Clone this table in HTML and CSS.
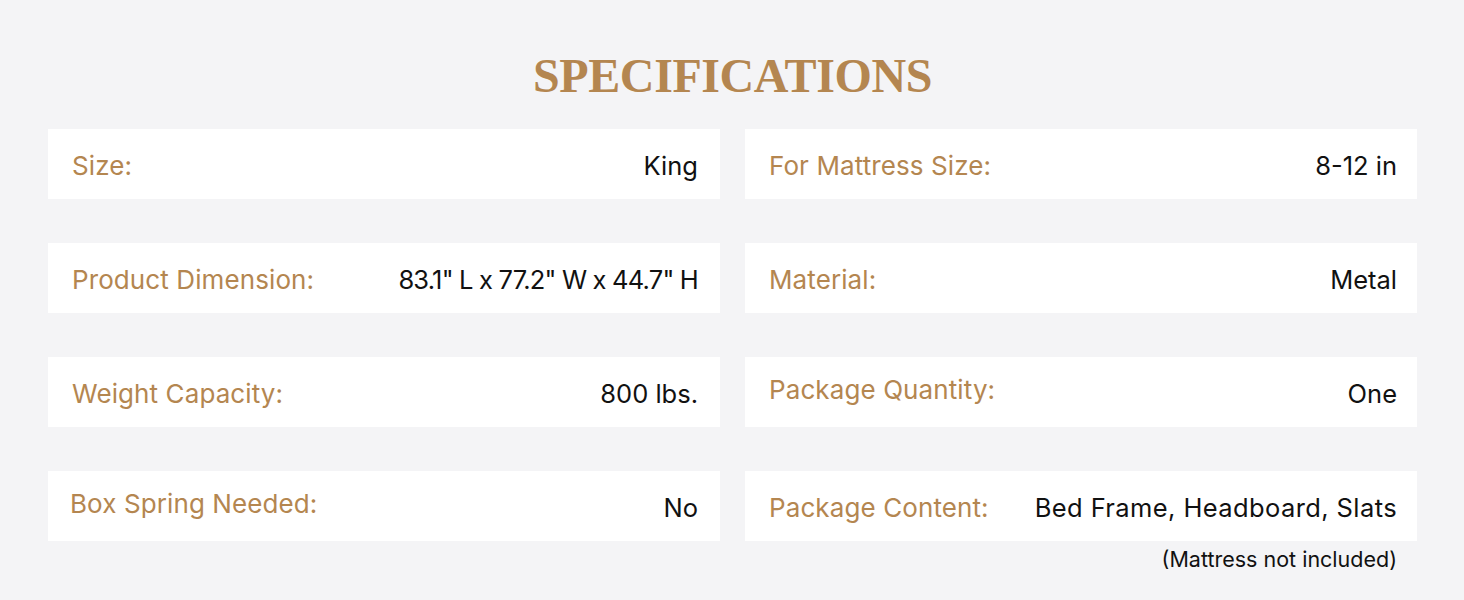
FILE: index.html
```html
<!DOCTYPE html>
<html>
<head>
<meta charset="utf-8">
<link rel="stylesheet" href="styles.css">
</head>
<body>
<div class="page">
  <h1 class="title">SPECIFICATIONS</h1>
  <div class="grid">
    <div class="row"><span class="label">Size:</span><span class="value">King</span></div>
    <div class="row right"><span class="label">For Mattress Size:</span><span class="value">8-12 in</span></div>
    <div class="row"><span class="label">Product Dimension:</span><span class="value tight">83.1" L x 77.2" W x 44.7" H</span></div>
    <div class="row right"><span class="label">Material:</span><span class="value">Metal</span></div>
    <div class="row"><span class="label">Weight Capacity:</span><span class="value">800 lbs.</span></div>
    <div class="row right"><span class="label up">Package Quantity:</span><span class="value">One</span></div>
    <div class="row"><span class="label up shift">Box Spring Needed:</span><span class="value">No</span></div>
    <div class="cell">
      <div class="row right"><span class="label">Package Content:</span><span class="value wide">Bed Frame, Headboard, Slats</span></div>
      <div class="note">(Mattress not included)</div>
    </div>
  </div>
</div>
</body>
</html>
```

FILE: styles.css
```css
html, body {
  margin: 0;
  padding: 0;
  background: #f4f4f6;
}
.page {
  width: 1464px;
  height: 600px;
  box-sizing: border-box;
  padding: 49px 47px 0 48px;
  font-family: "Inter", "Open Sans", sans-serif;
}
.title {
  margin: 0;
  text-align: center;
  font-family: "Liberation Serif", serif;
  font-weight: 700;
  font-size: 48px;
  line-height: 54px;
  letter-spacing: -0.4px;
  color: #b48650;
  height: 80px;
}
.grid {
  display: grid;
  grid-template-columns: 672px 672px;
  column-gap: 25px;
  row-gap: 44px;
  grid-auto-rows: 70px;
}
.row {
  background: #ffffff;
  height: 70px;
  flex-shrink: 0;
  box-sizing: border-box;
  padding: 0 22px 0 24px;
  display: flex;
  align-items: center;
  justify-content: space-between;
  font-size: 25.5px;
}
.row.right {
  padding-right: 20px;
}
.label {
  color: #b48650;
  position: relative;
  top: 1px;
  font-size: 26px;
  letter-spacing: 0.1px;
}
.label.up {
  top: -3px;
}
.label.shift {
  left: -2px;
}
.value {
  color: #111111;
  position: relative;
  top: 1px;
}
.value.tight {
  letter-spacing: -0.8px;
}
.value.wide {
  letter-spacing: 0.4px;
}
.cell {
  display: flex;
  flex-direction: column;
  height: 70px;
}
.note {
  text-align: right;
  padding-right: 20px;
  margin-top: 5px;
  font-size: 21.5px;
  line-height: 26px;
  color: #111111;
}
```
